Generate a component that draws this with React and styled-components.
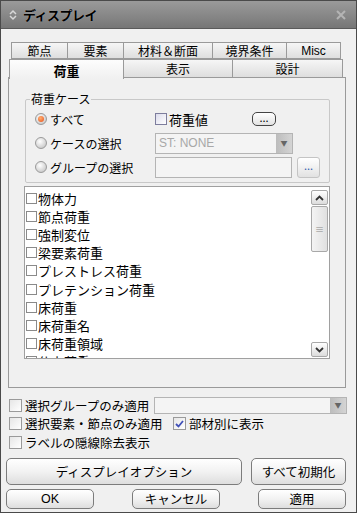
import styled, { createGlobalStyle } from "styled-components"

const Global = createGlobalStyle`
  html, body { margin: 0; padding: 0; background: #f0f0f0; }
  body { font-family: "Noto Sans CJK JP", "Liberation Sans", sans-serif; font-size: 12px; color: #000; }
  * { box-sizing: border-box; }
`

const Window = styled.div`
  width: 357px;
  height: 513px;
  border: 1px solid #4a4a4a;
  background: #f0f0f0;
  display: flex;
  flex-direction: column;
  overflow: hidden;
`
const TitleBar = styled.div`
  height: 28px;
  flex: none;
  background: linear-gradient(#9a9a9a, #858585 60%, #767676);
  border-bottom: 1px solid #5a5a5a;
  display: flex;
  align-items: center;
  padding: 0 10px 0 8px;
`
const Title = styled.div`
  font-weight: bold;
  font-size: 13px;
  margin-left: 6px;
  flex: 1;
  letter-spacing: -0.5px;
  text-shadow: 0 0 1px rgba(255,255,255,0.4);
`
const Body = styled.div`
  flex: 1;
  display: flex;
  flex-direction: column;
  padding: 13px 0 0 7px;
`
const TabRow = styled.div`
  display: flex;
  margin-left: ${p => p.$indent}px;
  height: ${p => p.$h}px;
  position: relative;
  z-index: ${p => p.$z};
`
const Tab = styled.div`
  width: ${p => p.$w}px;
  height: ${p => (p.$active ? p.$h + 1 : p.$h)}px;
  border: 1px solid #9a9a9a;
  border-bottom: ${p => (p.$active ? "none" : "1px solid #9a9a9a")};
  margin-right: -1px;
  background: ${p => (p.$active ? "linear-gradient(#fdfdfd, #f0f0f0)" : "linear-gradient(#f6f6f6, #dedede)")};
  display: flex;
  align-items: center;
  justify-content: center;
  font-size: ${p => (p.$active ? 13 : 12)}px;
  font-weight: ${p => (p.$active ? "bold" : "normal")};
  font-family: ${p => (p.$latin ? '"Liberation Sans", sans-serif' : "inherit")};
  padding-top: ${p => (p.$active ? 2 : 0)}px;
  line-height: 1;
`
const Panel = styled.div`
  width: 338px;
  height: 311px;
  border: 1px solid #9a9a9a;
  background: #f0f0f0;
  margin-top: -1px;
  padding: 14px 15px 0 16px;
  display: flex;
  flex-direction: column;
`
const Group = styled.fieldset`
  margin: 0;
  padding: 1px 0 0 9px;
  border: 1px solid #c8c8c8;
  height: 91px;
  width: 305px;
  border-radius: 2px;
`
const Legend = styled.legend`
  padding: 0 1px;
  margin-left: -5px;
  font-size: 12px;
  line-height: 14px;
`
const GroupGrid = styled.div`
  display: grid;
  grid-template-columns: 120px 1fr;
  grid-auto-rows: 24px;
  align-items: center;
`
const Radio = styled.label`
  display: flex;
  align-items: center;
  gap: 3px;
`
const RadioDot = styled.span`
  width: 12px;
  height: 12px;
  border-radius: 50%;
  border: 1px solid #9a9a9a;
  background: radial-gradient(circle at 40% 35%, #ffffff, #d0d0d0 70%, #b8b8b8);
  display: flex;
  align-items: center;
  justify-content: center;
  &::after {
    content: "";
    display: ${p => (p.$on ? "block" : "none")};
    width: 6px;
    height: 6px;
    border-radius: 50%;
    background: radial-gradient(circle at 40% 35%, #ffb070, #e8501c);
  }
`
const Cell = styled.div`
  display: flex;
  align-items: center;
`
const Check = styled.span`
  width: ${p => p.$s || 12}px;
  height: ${p => p.$s || 12}px;
  flex: none;
  border: 1px solid ${p => p.$c || "#8f8f8f"};
  background: ${p => p.$bg || "linear-gradient(135deg, #e6e6e6, #ffffff)"};
  display: flex;
  align-items: center;
  justify-content: center;
  margin-right: ${p => p.$mr ?? 2}px;
`
const SmallBtn = styled.div`
  width: ${p => p.$w}px;
  height: ${p => p.$h}px;
  border: 1px solid ${p => p.$c};
  border-radius: ${p => p.$r}px;
  background: linear-gradient(#ffffff, #e2e2e2);
  display: flex;
  align-items: center;
  justify-content: center;
  font-size: 11px;
  line-height: 1;
  color: ${p => p.$fg};
  padding-bottom: 3px;
  margin-left: ${p => p.$ml}px;
  flex: none;
`
const Select = styled.div`
  width: ${p => p.$w}px;
  height: ${p => p.$h}px;
  border: 1px solid #b4b4b4;
  background: #f4f4f4;
  display: flex;
  align-items: stretch;
`
const SelectText = styled.div`
  flex: 1;
  color: #a8a8a8;
  font-family: "Liberation Sans", sans-serif;
  font-size: 12px;
  display: flex;
  align-items: center;
  padding-left: 3px;
`
const SelectArrow = styled.div`
  width: 16px;
  background: linear-gradient(90deg, #bcbcbc, #d4d4d4);
  display: flex;
  align-items: center;
  justify-content: center;
  font-size: 7px;
  color: #666;
`
const TextBox = styled.div`
  width: 137px;
  height: 21px;
  border: 1px solid #b4b4b4;
  background: #f4f4f4;
`
const List = styled.div`
  margin-top: 3px;
  margin-left: -1px;
  width: 306px;
  height: 173px;
  border: 1px solid #a0a0a0;
  background: #fff;
  display: flex;
  overflow: hidden;
`
const Items = styled.div`
  flex: 1;
  padding: 2px 0 0 1px;
  overflow: hidden;
`
const Item = styled.div`
  height: 18.2px;
  display: flex;
  align-items: center;
  font-size: 13px;
  white-space: nowrap;
`
const ScrollBar = styled.div`
  width: 18px;
  padding: 3px 1px 1px 0;
  display: flex;
  flex-direction: column;
`
const ScrollBtn = styled.div`
  height: 15px;
  border: 1px solid #a8a8a8;
  border-radius: 2px;
  background: linear-gradient(#ffffff, #dcdcdc);
  display: flex;
  align-items: center;
  justify-content: center;
`
const Thumb = styled.div`
  height: 46px;
  margin-top: 1px;
  border: 1px solid #a8a8a8;
  border-radius: 2px;
  background: linear-gradient(90deg, #f4f4f4, #e0e0e0);
  display: flex;
  align-items: center;
  justify-content: center;
  font-size: 9px;
  color: #888;
`
const Track = styled.div`
  flex: 1;
`
const Options = styled.div`
  padding: 8px 0 0 1px;
  display: grid;
  grid-template-columns: 164px 1fr;
  grid-auto-rows: 18.5px;
  align-items: center;
  font-size: 12.5px;
`
const Opt = styled.div`
  display: flex;
  align-items: center;
  white-space: nowrap;
  margin-left: ${p => p.$ml || 0}px;
`
const BtnRow = styled.div`
  display: flex;
  justify-content: space-between;
  padding-right: 10px;
  margin-top: ${p => p.$mt}px;
  margin-left: -2px;
`
const Button = styled.div`
  width: ${p => p.$w}px;
  height: ${p => p.$h}px;
  border: 1px solid #7c7c7c;
  border-radius: 5px;
  background: linear-gradient(#ffffff, #f2f2f2 50%, #dedede);
  display: flex;
  align-items: center;
  justify-content: center;
  font-size: 12.5px;
  font-family: ${p => (p.$latin ? '"Liberation Sans", sans-serif' : "inherit")};
`

const items = ["物体力", "節点荷重", "強制変位", "梁要素荷重", "プレストレス荷重", "プレテンション荷重", "床荷重", "床荷重名", "床荷重領域", "仕上荷重"]

const Chevron = ({ up }) => (
  <svg width="9" height="6" viewBox="0 0 9 6">
    <path d={up ? "M1 5 L4.5 1.5 L8 5" : "M1 1 L4.5 4.5 L8 1"} fill="none" stroke="#333" strokeWidth="1.8" />
  </svg>
)

const App = () => (
  <Window>
    <Global />
    <TitleBar>
      <svg width="8" height="12" viewBox="0 0 8 12">
        <path d="M1 5 L4 2 L7 5 M1 7 L4 10 L7 7" fill="none" stroke="#d8d8d8" strokeWidth="1.5" />
      </svg>
      <Title>ディスプレイ</Title>
      <svg width="10" height="10" viewBox="0 0 10 10">
        <path d="M1 1 L9 9 M9 1 L1 9" stroke="#b4b4b4" strokeWidth="2" />
      </svg>
    </TitleBar>
    <Body>
      <TabRow $indent={3} $h={17} $z={1}>
        <Tab $w={57} $h={17}>節点</Tab>
        <Tab $w={57} $h={17}>要素</Tab>
        <Tab $w={90} $h={17}>材料＆断面</Tab>
        <Tab $w={75} $h={17}>境界条件</Tab>
        <Tab $w={55} $h={17} $latin>Misc</Tab>
      </TabRow>
      <TabRow $indent={1} $h={19} $z={2}>
        <Tab $w={115} $h={19} $active>荷重</Tab>
        <Tab $w={110} $h={19}>表示</Tab>
        <Tab $w={111} $h={19}>設計</Tab>
      </TabRow>
      <Panel>
        <Group>
          <Legend>荷重ケース</Legend>
          <GroupGrid>
            <Radio><RadioDot $on />すべて</Radio>
            <Cell>
              <Check $bg="linear-gradient(135deg, #dcdcec, #ffffff)" $c="#7d7d9d" />
              <span style={{ fontSize: 13 }}>荷重値</span>
              <SmallBtn $w={24} $h={14} $r={5} $c="#444" $fg="#000" $ml={44}>...</SmallBtn>
            </Cell>
            <Radio><RadioDot />ケースの選択</Radio>
            <Cell>
              <Select $w={138} $h={21}>
                <SelectText>ST: NONE</SelectText>
                <SelectArrow>▼</SelectArrow>
              </Select>
            </Cell>
            <Radio><RadioDot />グループの選択</Radio>
            <Cell>
              <TextBox />
              <SmallBtn $w={23} $h={21} $r={3} $c="#c4c4c4" $fg="#3060b0" $ml={5}>...</SmallBtn>
            </Cell>
          </GroupGrid>
        </Group>
        <List>
          <Items>
            {items.map(t => (
              <Item key={t}>
                <Check $s={11} $c="#8a8a8a" $bg="#fff" $mr={1} />
                {t}
              </Item>
            ))}
          </Items>
          <ScrollBar>
            <ScrollBtn><Chevron up /></ScrollBtn>
            <Thumb>≡</Thumb>
            <Track />
            <ScrollBtn><Chevron /></ScrollBtn>
          </ScrollBar>
        </List>
      </Panel>
      <Options>
        <Opt><Check $s={13} $c="#9a9a9a" $mr={3} />選択グループのみ適用</Opt>
        <Opt $ml={-19}>
          <Select $w={193} $h={17}>
            <SelectText />
            <SelectArrow>▼</SelectArrow>
          </Select>
        </Opt>
        <Opt><Check $s={13} $c="#9a9a9a" $mr={3} />選択要素・節点のみ適用</Opt>
        <Opt $ml={0}>
          <Check $s={13} $c="#9a9a9a" $mr={3}>
            <svg width="9" height="8" viewBox="0 0 9 8">
              <path d="M1 4 L3.5 6.5 L8 1" fill="none" stroke="#4050b8" strokeWidth="1.8" />
            </svg>
          </Check>
          部材別に表示
        </Opt>
        <Opt><Check $s={13} $c="#9a9a9a" $mr={3} />ラベルの隠線除去表示</Opt>
      </Options>
      <BtnRow $mt={6}>
        <Button $w={236} $h={27}>ディスプレイオプション</Button>
        <Button $w={95} $h={27}>すべて初期化</Button>
      </BtnRow>
      <BtnRow $mt={4}>
        <Button $w={88} $h={20} $latin>OK</Button>
        <Button $w={88} $h={20}>キャンセル</Button>
        <Button $w={88} $h={20}>適用</Button>
      </BtnRow>
    </Body>
  </Window>
)

export default App
